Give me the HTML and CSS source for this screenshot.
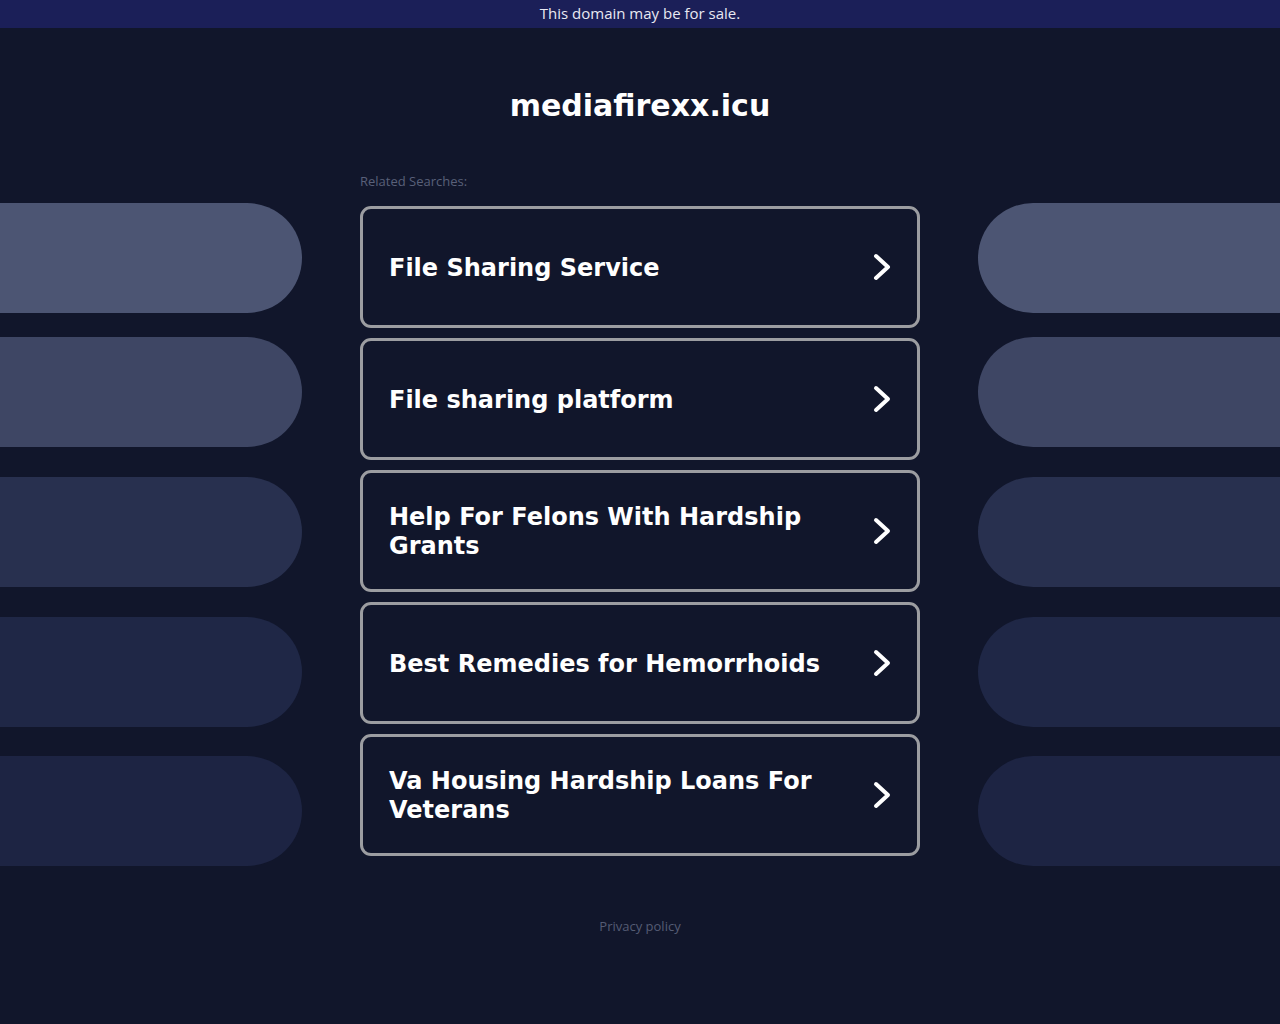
FILE: index.html
```html
<!DOCTYPE html>
<html lang="en">
<head>
<meta charset="utf-8">
<title>mediafirexx.icu</title>
<link rel="stylesheet" href="styles.css">
</head>
<body>
<div class="topbar">This domain may be for sale.</div>
<header class="header"><h1 class="title">mediafirexx.icu</h1></header>
<main class="layout">
  <div class="side side-left">
    <div class="pill p1"></div>
    <div class="pill p2"></div>
    <div class="pill p3"></div>
    <div class="pill p4"></div>
    <div class="pill p5"></div>
  </div>
  <section class="center">
    <div class="label">Related Searches:</div>
    <div class="cards">
      <a class="card" href="#"><span class="card-text">File Sharing Service</span><svg class="chev" viewBox="0 0 18 28"><path d="M3 3 L15 14 L3 25"/></svg></a>
      <a class="card" href="#"><span class="card-text">File sharing platform</span><svg class="chev" viewBox="0 0 18 28"><path d="M3 3 L15 14 L3 25"/></svg></a>
      <a class="card" href="#"><span class="card-text">Help For Felons With Hardship Grants</span><svg class="chev" viewBox="0 0 18 28"><path d="M3 3 L15 14 L3 25"/></svg></a>
      <a class="card" href="#"><span class="card-text">Best Remedies for Hemorrhoids</span><svg class="chev" viewBox="0 0 18 28"><path d="M3 3 L15 14 L3 25"/></svg></a>
      <a class="card" href="#"><span class="card-text">Va Housing Hardship Loans For Veterans</span><svg class="chev" viewBox="0 0 18 28"><path d="M3 3 L15 14 L3 25"/></svg></a>
    </div>
  </section>
  <div class="side side-right">
    <div class="pill p1"></div>
    <div class="pill p2"></div>
    <div class="pill p3"></div>
    <div class="pill p4"></div>
    <div class="pill p5"></div>
  </div>
</main>
<footer class="footer"><a href="#" class="privacy">Privacy policy</a></footer>
</body>
</html>
```
FILE: styles.css
```css
html, body {
  margin: 0;
  padding: 0;
}
body {
  background: #11162b;
  min-height: 1024px;
  font-family: "Open Sans", "DejaVu Sans", sans-serif;
}
.topbar {
  height: 28px;
  line-height: 27px;
  background: #1b1f58;
  color: #e9e9f2;
  font-size: 15px;
  text-align: center;
}
.header {
  padding-top: 59px;
  height: 83px;
  text-align: center;
}
.title {
  margin: 0;
  font-family: "DejaVu Sans", sans-serif;
  font-weight: bold;
  font-size: 30px;
  line-height: 38px;
  color: #ffffff;
}
.layout {
  display: grid;
  grid-template-columns: 302px 560px 302px;
  column-gap: 58px;
}
.side {
  display: flex;
  flex-direction: column;
  padding-top: 33px;
}
.pill {
  height: 110px;
  flex: none;
}
.side-left .pill { border-radius: 0 55px 55px 0; }
.side-right .pill { border-radius: 55px 0 0 55px; }
.pill.p2 { margin-top: 24px; }
.pill.p3 { margin-top: 30px; }
.pill.p4 { margin-top: 30px; }
.pill.p5 { margin-top: 29px; }
.p1 { background: #4c5573; }
.p2 { background: #3e4664; }
.p3 { background: #28304f; }
.p4 { background: #1f2746; }
.p5 { background: #1d2443; }
.center {
  padding-top: 2px;
}
.label {
  font-size: 13px;
  line-height: 18px;
  color: #596079;
  margin-bottom: 16px;
}
.cards {
  display: flex;
  flex-direction: column;
  gap: 10px;
}
.card {
  box-sizing: border-box;
  height: 122px;
  border: 3px solid #9c9da1;
  border-radius: 11px;
  display: flex;
  align-items: center;
  justify-content: space-between;
  padding: 0 26px 0 26px;
  text-decoration: none;
  color: #ffffff;
}
.card-text {
  font-family: "DejaVu Sans", sans-serif;
  font-weight: bold;
  font-size: 24px;
  line-height: 29px;
  max-width: 440px;
  padding-top: 2px;
}
.chev {
  width: 18px;
  height: 28px;
  flex: none;
  fill: none;
  stroke: #ffffff;
  stroke-width: 4;
  stroke-linecap: round;
  stroke-linejoin: round;
}
.footer {
  text-align: center;
  padding-top: 48px;
}
.privacy {
  font-size: 13px;
  line-height: 18px;
  color: #555c74;
  text-decoration: none;
}
```
